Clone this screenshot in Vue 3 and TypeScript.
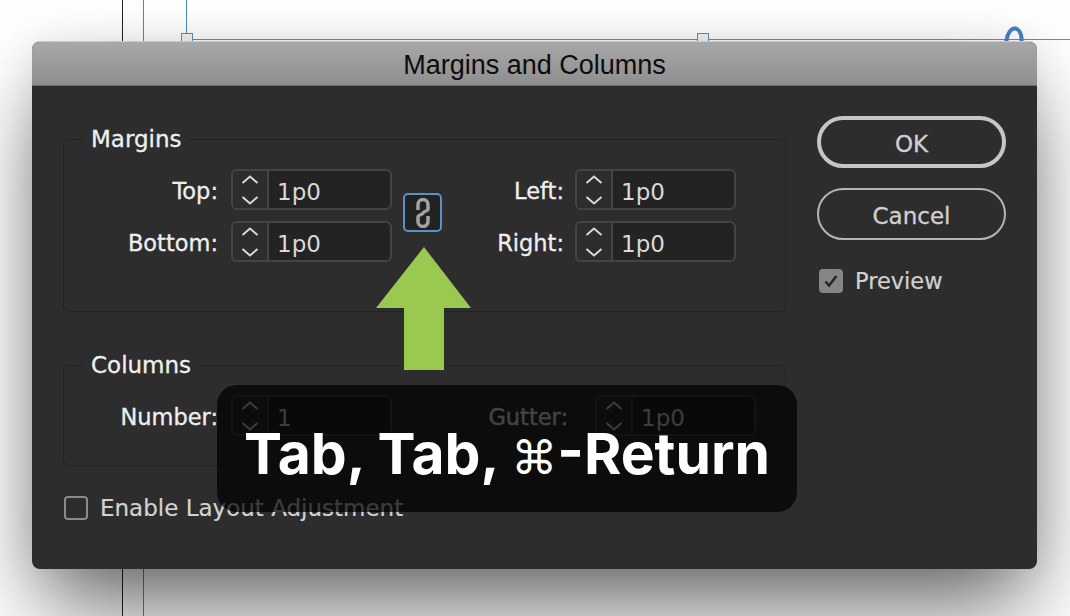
<script setup lang="ts">
interface Row { label: string; value: string }
const leftRows: Row[] = [
  { label: 'Top:', value: '1p0' },
  { label: 'Bottom:', value: '1p0' },
]
const rightRows: Row[] = [
  { label: 'Left:', value: '1p0' },
  { label: 'Right:', value: '1p0' },
]
const columnCells: Row[] = [
  { label: 'Number:', value: '1' },
  { label: 'Gutter:', value: '1p0' },
]
</script>

<template>
  <div class="stage">
    <i class="guide black" style="left: 122px"></i>
    <i class="guide blue" style="left: 143px"></i>
    <i class="guide blue short" style="left: 186px"></i>
    <i class="hline"></i>
    <i class="handle" style="left: 181px"></i>
    <i class="handle" style="left: 697px"></i>
    <svg class="glyph" width="24" height="30" viewBox="0 0 24 30">
      <ellipse cx="11" cy="15" rx="7.500" ry="12.500" fill="none" stroke="#4a7fc4" stroke-width="4" transform="rotate(6 11 15)" />
    </svg>

    <div class="dialog">
      <header class="titlebar">Margins and Columns</header>
      <div class="body">
        <div class="main">
          <fieldset class="group margins">
            <legend>Margins</legend>
            <div class="margin-row">
              <div class="pairs left-pairs">
                <template v-for="r in leftRows" :key="r.label">
                  <label class="lbl">{{ r.label }}</label>
                  <div class="field">
                    <span class="stepper">
                      <svg width="20" height="30" viewBox="0 0 20 30"><path d="M2.500 8 10 1.500 17.500 8M2.500 22 10 28.500 17.500 22" /></svg>
                    </span>
                    <span class="val">{{ r.value }}</span>
                  </div>
                </template>
              </div>
              <button class="link" type="button" aria-label="Link margins">
                <svg width="16" height="30" viewBox="0 0 16 30">
                  <path d="M3 12V6.500a5 5 0 0 1 10 0V11c0 2.500-5 2-5 4.500" />
                  <path d="M13 18v5.500a5 5 0 0 1-10 0V19c0-2.500 5-2 5-4.500" />
                </svg>
              </button>
              <div class="pairs right-pairs">
                <template v-for="r in rightRows" :key="r.label">
                  <label class="lbl">{{ r.label }}</label>
                  <div class="field">
                    <span class="stepper">
                      <svg width="20" height="30" viewBox="0 0 20 30"><path d="M2.500 8 10 1.500 17.500 8M2.500 22 10 28.500 17.500 22" /></svg>
                    </span>
                    <span class="val">{{ r.value }}</span>
                  </div>
                </template>
              </div>
            </div>
          </fieldset>

          <fieldset class="group columns">
            <legend>Columns</legend>
            <div class="col-row">
              <div v-for="c in columnCells" :key="c.label" class="col-cell">
                <label class="lbl">{{ c.label }}</label>
                <div class="field">
                  <span class="stepper">
                    <svg width="20" height="30" viewBox="0 0 20 30"><path d="M2.500 8 10 1.500 17.500 8M2.500 22 10 28.500 17.500 22" /></svg>
                  </span>
                  <span class="val">{{ c.value }}</span>
                </div>
              </div>
            </div>
          </fieldset>

          <div class="check adjust">
            <span class="box"></span>
            <span>Enable Layout Adjustment</span>
          </div>
        </div>

        <aside class="side">
          <button class="btn ok" type="button">OK</button>
          <button class="btn cancel" type="button">Cancel</button>
          <div class="check preview">
            <span class="box on">
              <svg width="16" height="14" viewBox="0 0 16 14"><path d="M2.500 7.500 6 11.500 13.500 2" /></svg>
            </span>
            <span>Preview</span>
          </div>
        </aside>
      </div>
    </div>

    <svg class="arrow" width="95" height="124" viewBox="0 0 95 124">
      <path d="M48 0 95 61H68V123H28V61H0z" fill="#9bc84f" />
    </svg>

    <div class="pill">Tab, Tab, <span class="cmd">⌘</span>-Return</div>
  </div>
</template>

<style>
html, body { margin: 0; background: #fff; }
</style>

<style scoped>
.stage {
  position: relative;
  width: 1070px;
  height: 616px;
  overflow: hidden;
  background: #fff;
  font-family: "DejaVu Sans", sans-serif;
}
.guide {
  position: absolute;
  top: 0;
  bottom: 0;
  width: 1px;
}
.guide.black { background: #222; }
.guide.blue { background: #4f86c6; }
.guide.short { bottom: auto; height: 34px; }
.hline {
  position: absolute;
  left: 186px;
  right: 0;
  top: 39px;
  height: 1px;
  background: #5b8fc9;
}
.handle {
  position: absolute;
  top: 33px;
  width: 10px;
  height: 10px;
  border: 1px solid #5b8fc9;
  background: #f4f5f5;
}
.glyph {
  position: absolute;
  left: 1003px;
  top: 26px;
}
.dialog {
  position: absolute;
  left: 32px;
  top: 42px;
  width: 1005px;
  height: 527px;
  display: flex;
  flex-direction: column;
  background: #2d2d2d;
  border-radius: 8px;
  box-shadow: 0 -1px 0 #c9c9c9, 0 46px 84px -10px rgba(0, 0, 0, 0.6), 0 0 36px rgba(0, 0, 0, 0.08);
}
.titlebar {
  height: 43px;
  flex: none;
  border-radius: 8px 8px 0 0;
  border-bottom: 1px solid #6e6e6e;
  background: linear-gradient(#a8a8a8, #8e8e8e);
  color: #0c0c0c;
  font-family: "Liberation Sans", sans-serif;
  font-size: 27px;
  line-height: 46px;
  text-align: center;
}
.body {
  flex: 1;
  display: flex;
  padding: 39px 31px 0;
  gap: 31px;
}
.main { width: 723px; flex: none; }
.group {
  margin: 0;
  padding: 16px 0 0 0;
  border: 1px solid #232323;
  border-radius: 6px;
  box-sizing: border-box;
  min-width: 0;
}
legend {
  margin-left: 20px;
  padding: 0 7px;
  height: 28px;
  line-height: 28px;
  font-size: 23px;
  color: #f0f0f0;
  -webkit-text-stroke: 0.3px #f0f0f0;
}
.margins { height: 187px; }
.columns { height: 115px; margin-top: 39px; }
.margin-row { display: flex; align-items: flex-start; }
.pairs {
  display: grid;
  row-gap: 11px;
  align-items: center;
}
.left-pairs { grid-template-columns: 154px 161px; column-gap: 13px; }
.right-pairs { grid-template-columns: 116px 161px; column-gap: 11px; margin-left: 6px; }
.lbl {
  padding-top: 2px;
  text-align: right;
  font-size: 22.5px;
  color: #efefef;
  white-space: nowrap;
  -webkit-text-stroke: 0.3px #efefef;
}
.field {
  box-sizing: border-box;
  height: 41px;
  width: 161px;
  display: flex;
  align-items: stretch;
  border: 2px solid #444;
  border-radius: 6px;
  background: #232323;
}
.stepper {
  width: 34px;
  flex: none;
  display: flex;
  align-items: center;
  justify-content: center;
  background: #2d2d2d;
  border-right: 2px solid #444;
  border-radius: 4px 0 0 4px;
}
.stepper svg { fill: none; stroke: #d8d8d8; stroke-width: 2; }
.val {
  padding-left: 8px;
  font-size: 23px;
  line-height: 42px;
  color: #d8d8d8;
}
.link {
  margin: 24px 0 0 11px;
  width: 39px;
  height: 39px;
  flex: none;
  padding: 0;
  box-sizing: border-box;
  display: flex;
  align-items: center;
  justify-content: center;
  background: #222;
  border: 2px solid #5d90c8;
  border-radius: 5px;
}
.link svg { fill: none; stroke: #a2a2a2; stroke-width: 3.500; }
.col-row { display: flex; }
.col-cell { display: flex; align-items: center; }
.col-cell:first-child .lbl { width: 154px; margin-right: 13px; }
.col-cell:last-child .lbl { width: 176px; margin-right: 27px; }
.check {
  display: flex;
  align-items: center;
  color: #d2d2d2;
  font-size: 23px;
  -webkit-text-stroke: 0.2px #d2d2d2;
}
.box {
  box-sizing: border-box;
  width: 24px;
  height: 24px;
  flex: none;
  display: flex;
  align-items: center;
  justify-content: center;
  border: 2px solid #8b8b8b;
  border-radius: 4px;
}
.box.on { background: #858585; border-color: #858585; }
.box svg { fill: none; stroke: #262626; stroke-width: 2.500; }
.adjust { margin: 29px 0 0 1px; gap: 12px; }
.side {
  display: flex;
  flex-direction: column;
  width: 190px;
  margin-top: -9px;
}
.btn {
  box-sizing: border-box;
  height: 52px;
  background: transparent;
  border-radius: 26px;
  font-family: inherit;
  font-size: 23px;
  color: #d0d0d0;
  padding: 3px 0 0;
  -webkit-text-stroke: 0.3px #d0d0d0;
}
.ok { border: 4px solid #c6c6c6; }
.cancel { border: 2px solid #b4b4b4; margin-top: 20px; }
.preview { margin: 28px 0 0 2px; gap: 12px; font-size: 22.5px; }
.arrow {
  position: absolute;
  left: 376px;
  top: 247px;
}
.pill {
  position: absolute;
  left: 217px;
  top: 385px;
  width: 580px;
  height: 127px;
  box-sizing: border-box;
  border-radius: 20px;
  background: rgba(0, 0, 0, 0.72);
  color: #fff;
  font-family: Inter, sans-serif;
  font-weight: 700;
  font-size: 57px;
  line-height: 137px;
  text-align: center;
  white-space: nowrap;
}
.cmd {
  font-family: "DejaVu Sans", sans-serif;
  font-weight: 400;
  font-size: 46px;
}
</style>
